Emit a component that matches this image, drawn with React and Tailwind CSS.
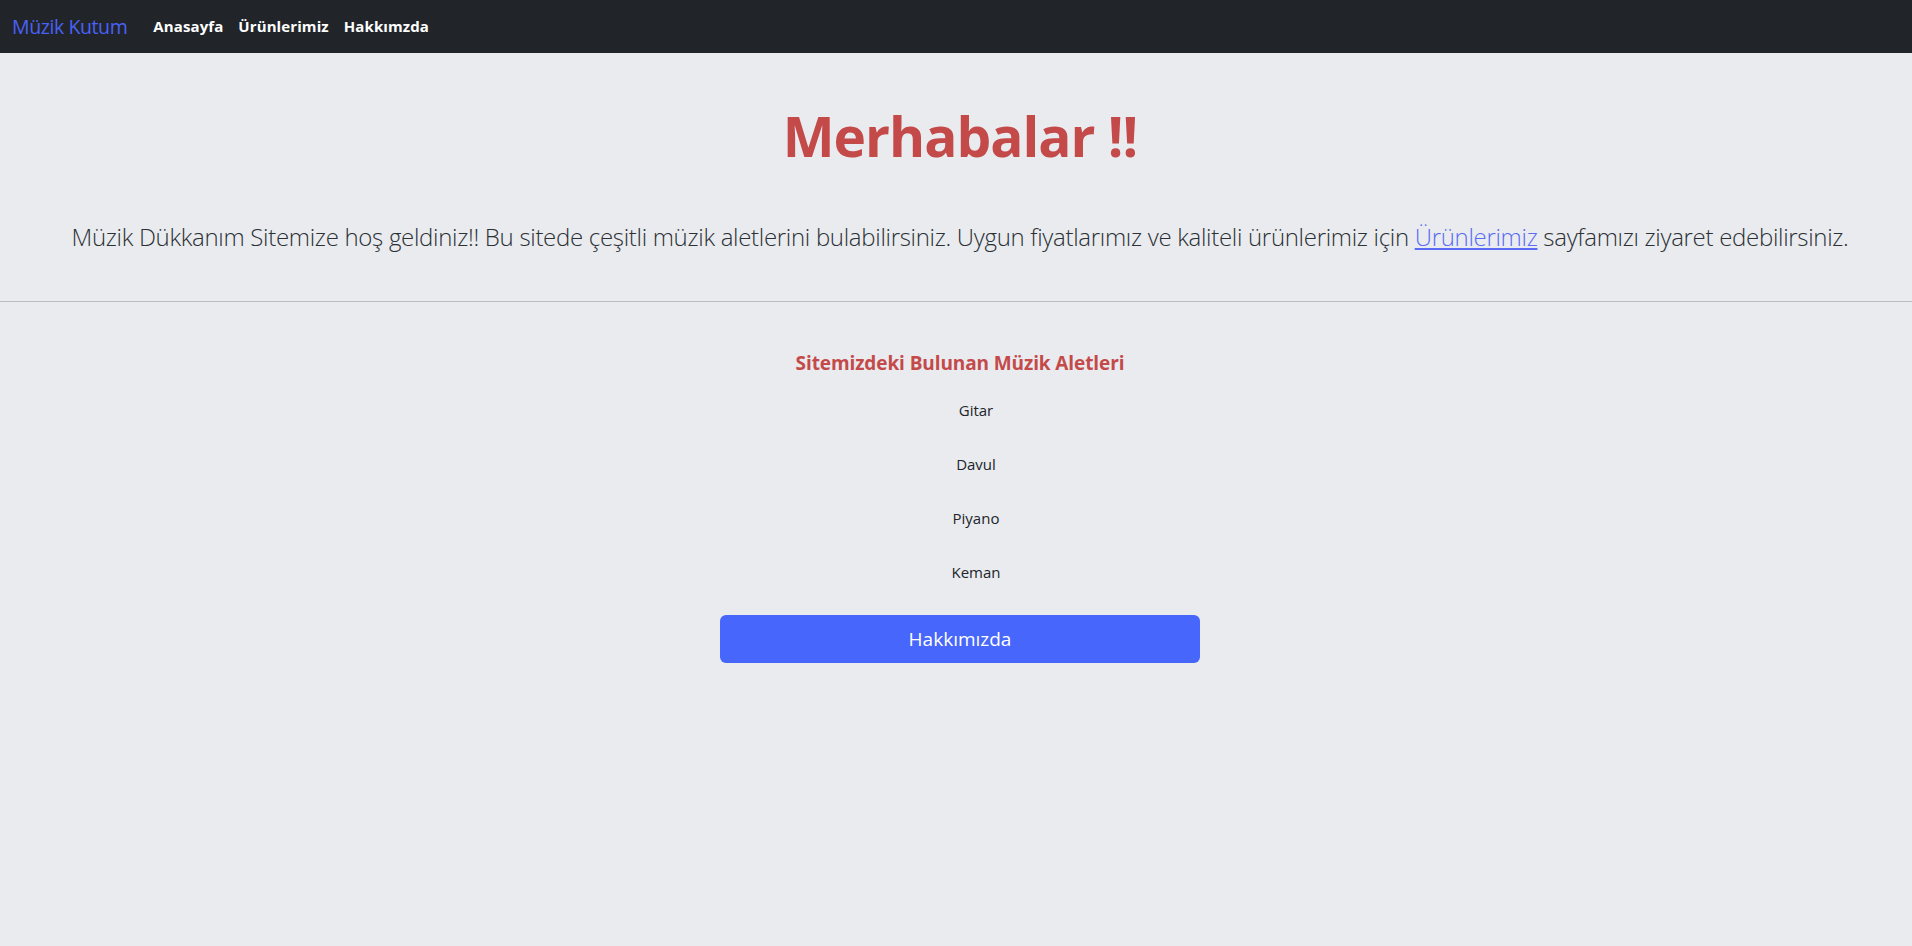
import React from "react";

const items = ["Gitar", "Davul", "Piyano", "Keman"];

export default function App() {
  return (
    <div className="min-h-screen bg-[#e9ebef] text-[#212529] font-['Open_Sans',sans-serif]">
      <nav className="h-[53px] bg-[#212529] flex items-center px-3">
        <a href="#" className="text-[19.5px] text-[#4a61f7] tracking-[-0.4px] mr-[26px]">Müzik Kutum</a>
        <div className="flex items-center gap-[15px] text-[15px] font-bold text-white tracking-[0.1px]">
          <a href="#">Anasayfa</a>
          <a href="#">Ürünlerimiz</a>
          <a href="#">Hakkımzda</a>
        </div>
      </nav>

      <main className="pl-[8px]">
        <header className="text-center pt-[47px] pb-[46px]">
          <h1 className="text-[55px] leading-[72px] font-bold text-[#c44a4a] tracking-[-1px]">Merhabalar !!</h1>
          <p className="mt-[47px] text-[24px] leading-[36px] font-light text-[#2b3035] tracking-[-0.3px]">
            Müzik Dükkanım Sitemize hoş geldiniz!! Bu sitede çeşitli müzik aletlerini bulabilirsiniz. Uygun fiyatlarımız ve kaliteli ürünlerimiz için{" "}
            <a href="#" className="text-[#5a6cf5] underline">Ürünlerimiz</a> sayfamızı ziyaret edebilirsiniz.
          </p>
        </header>
      </main>

      <hr className="border-0 border-t border-[#bdbec2]" />

      <section className="pl-[8px] flex flex-col items-center pt-[49px]">
        <h5 className="text-[19px] leading-[24px] font-bold text-[#c44a4a] tracking-[-0.1px]">Sitemizdeki Bulunan Müzik Aletleri</h5>
        <ul className="mt-[8px] pl-8 text-center text-[15px]">
          {items.map((it) => (
            <li key={it} className="h-[54px] flex items-center justify-center">{it}</li>
          ))}
        </ul>
        <button className="mt-[16px] w-[480px] h-[48px] rounded-[6px] bg-[#4766fb] text-white text-[19px]">Hakkımızda</button>
      </section>
    </div>
  );
}
